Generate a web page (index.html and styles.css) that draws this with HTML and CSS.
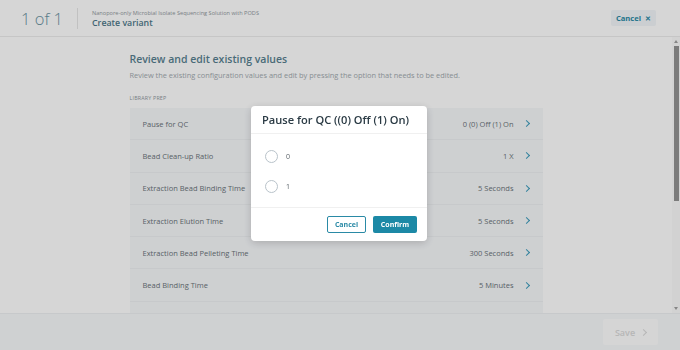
FILE: index.html
```html
<!DOCTYPE html>
<html>
<head>
<meta charset="utf-8">
<link rel="stylesheet" href="styles.css">
</head>
<body>
<div class="app">
  <header class="topbar">
    <div class="counter">1 of 1</div>
    <div class="divider"></div>
    <div class="titles">
      <div class="subtitle">Nanopore-only Microbial Isolate Sequencing Solution with PODS</div>
      <div class="heading">Create variant</div>
    </div>
    <button class="cancel-top">Cancel <span class="x">✕</span></button>
  </header>
  <div class="middle">
    <main class="scroller">
      <div class="content">
        <h1 class="title">Review and edit existing values</h1>
        <p class="desc">Review the existing configuration values and edit by pressing the option that needs to be edited.</p>
        <div class="section">LIBRARY PREP</div>
        <ul class="list">
          <li class="row"><span class="label">Pause for QC</span><span class="value">0 (0) Off (1) On</span><span class="chev"></span></li>
          <li class="row"><span class="label">Bead Clean-up Ratio</span><span class="value">1 X</span><span class="chev"></span></li>
          <li class="row"><span class="label">Extraction Bead Binding Time</span><span class="value">5 Seconds</span><span class="chev"></span></li>
          <li class="row"><span class="label">Extraction Elution Time</span><span class="value">5 Seconds</span><span class="chev"></span></li>
          <li class="row"><span class="label">Extraction Bead Pelleting Time</span><span class="value">300 Seconds</span><span class="chev"></span></li>
          <li class="row"><span class="label">Bead Binding Time</span><span class="value">5 Minutes</span><span class="chev"></span></li>
          <li class="row row-empty"></li>
        </ul>
      </div>
    </main>
    <div class="scrollbar">
      <span class="arrow-up"></span>
      <div class="track"><div class="thumb"></div></div>
      <span class="arrow-down"></span>
    </div>
  </div>
  <footer class="footer">
    <button class="save">Save <span class="save-chev"></span></button>
  </footer>
</div>
<div class="overlay"></div>
<div class="modal">
  <div class="modal-head">Pause for QC ((0) Off (1) On)</div>
  <div class="modal-body">
    <label class="opt"><span class="radio"></span><span class="opt-text">0</span></label>
    <label class="opt"><span class="radio"></span><span class="opt-text">1</span></label>
  </div>
  <div class="modal-foot">
    <button class="btn-outline">Cancel</button>
    <button class="btn-primary">Confirm</button>
  </div>
</div>
</body>
</html>
```
FILE: styles.css
```css
* { box-sizing: border-box; }
html, body { margin: 0; padding: 0; height: 100%; }
body {
  font-family: "Open Sans", "Noto Sans", sans-serif;
  background: #ffffff;
  color: #333;
}
button { font-family: inherit; }
.app {
  height: 350px;
  display: flex;
  flex-direction: column;
}
.topbar {
  height: 37px;
  flex: none;
  display: flex;
  align-items: center;
  padding: 0 22px 0 21px;
  border-bottom: 1px solid #ececec;
  background: #fff;
}
.counter {
  font-size: 16.5px;
  font-weight: 300;
  color: #6a93a2;
}
.divider {
  width: 1px;
  height: 21px;
  background: #e6e6e6;
  margin: 0 14px 0 14px;
}
.titles { flex: 1; display: flex; flex-direction: column; padding-top: 1px; }
.subtitle { font-size: 5.6px; color: #8f989d; line-height: 8px; }
.heading { font-size: 8.8px; font-weight: 600; color: #4d7789; line-height: 12px; }
.cancel-top {
  border: none;
  background: #f2f6f9;
  color: #2a8aa6;
  font-weight: 700;
  font-size: 7.6px;
  height: 16px;
  width: 45px;
  padding: 0;
  margin-right: 2px;
  border-radius: 2px;
}
.cancel-top .x { font-size: 6.5px; margin-left: 2px; }
.middle {
  flex: 1;
  display: flex;
  min-height: 0;
}
.scroller {
  flex: 1;
  overflow: hidden;
}
.scrollbar {
  width: 8px;
  flex: none;
  display: flex;
  flex-direction: column;
  align-items: center;
  padding: 3px 0 3px;
  background: #fbfbfb;
}
.arrow-up, .arrow-down {
  width: 0;
  height: 0;
  border-left: 2.5px solid transparent;
  border-right: 2.5px solid transparent;
  flex: none;
}
.arrow-up { border-bottom: 3px solid #a0a0a0; }
.arrow-down { border-top: 3px solid #a0a0a0; }
.track {
  flex: 1;
  width: 100%;
  padding: 3px 1px 0 2px;
}
.thumb {
  height: 155px;
  background: #939393;
}
.content {
  width: 413px;
  margin: 0 auto;
  padding-top: 14px;
}
.title {
  margin: 0;
  font-size: 10.5px;
  font-weight: 600;
  color: #587f90;
  line-height: 16px;
}
.desc {
  margin: 3px 0 0;
  font-size: 7.4px;
  color: #a2aaaf;
  line-height: 10px;
}
.section {
  margin-top: 14px;
  font-size: 5.3px;
  color: #8e979c;
  line-height: 8px;
  letter-spacing: 0.2px;
}
.list {
  list-style: none;
  margin: 6px 0 0;
  padding: 0;
  background: #f6f8fa;
}
.row {
  height: 32.3px;
  display: flex;
  align-items: center;
  padding: 0 12px 0 13px;
  border-bottom: 1px solid #edf0f2;
}
.label { flex: 1; font-size: 7.5px; color: #6a7379; }
.value { font-size: 7.5px; color: #6a7379; margin-right: 10px; }
.chev {
  width: 5px;
  height: 5px;
  border-right: 1.6px solid #3c9bbb;
  border-top: 1.6px solid #3c9bbb;
  transform: rotate(45deg);
  margin-right: 2px;
}
.footer {
  height: 37px;
  flex: none;
  background: #f7f9fb;
  border-top: 1px solid #eef0f2;
  display: flex;
  justify-content: flex-end;
  align-items: center;
  padding-right: 22px;
}
.save {
  width: 55px;
  height: 26px;
  border: none;
  background: #fefefe;
  color: #dadada;
  font-weight: 600;
  font-size: 9px;
  display: flex;
  align-items: center;
  justify-content: center;
  gap: 6px;
  border-radius: 2px;
  padding: 0;
}
.save-chev {
  width: 5px;
  height: 5px;
  border-right: 1.5px solid #dadada;
  border-top: 1.5px solid #dadada;
  transform: rotate(45deg);
}
.overlay {
  position: fixed;
  inset: 0;
  background: rgba(0, 0, 0, 0.16);
}
.modal {
  position: fixed;
  left: 251px;
  top: 106px;
  width: 176px;
  height: 135px;
  background: #fff;
  border-radius: 4px;
  box-shadow: 0 2px 8px rgba(0,0,0,0.18);
  display: flex;
  flex-direction: column;
}
.modal-head {
  height: 28px;
  flex: none;
  padding: 0 11px;
  display: flex;
  align-items: center;
  font-size: 11.1px;
  font-weight: 600;
  color: #2a3a44;
  border-bottom: 1px solid #f0f0f0;
}
.modal-body {
  flex: 1;
  padding: 16px 14px 0;
  display: flex;
  flex-direction: column;
  gap: 17px;
}
.opt { display: flex; align-items: center; gap: 8px; height: 13px; }
.radio {
  width: 13px;
  height: 13px;
  border-radius: 50%;
  border: 1px solid #b9c3ca;
}
.opt-text { font-size: 7px; color: #5a6268; }
.modal-foot {
  height: 34px;
  flex: none;
  border-top: 1px solid #f0f0f0;
  display: flex;
  justify-content: flex-end;
  align-items: center;
  gap: 7px;
  padding: 0 10px 0 0;
}
.btn-outline {
  width: 39px;
  height: 17px;
  border: 1px solid #2a8aa6;
  background: #fff;
  color: #2a8aa6;
  font-weight: 700;
  font-size: 7px;
  border-radius: 2px;
  padding: 0;
}
.btn-primary {
  width: 44px;
  height: 17px;
  border: none;
  background: #1c89a6;
  color: #fff;
  font-weight: 700;
  font-size: 7px;
  border-radius: 2px;
  padding: 0;
}
```
